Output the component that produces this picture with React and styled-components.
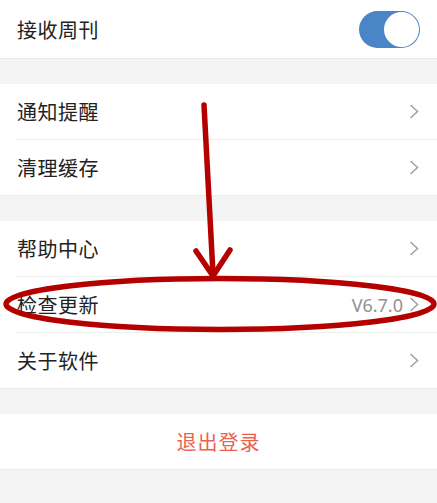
import React from 'react';
import styled, { createGlobalStyle } from 'styled-components';

const GlobalStyle = createGlobalStyle`
  html, body {
    margin: 0;
    padding: 0;
    background: #f4f4f4;
  }
  body {
    font-family: "Noto Sans CJK SC", "Noto Sans", sans-serif;
  }
`;

function Chevron() {
  return (
    <svg width="10" height="15" viewBox="0 0 10 15">
      <polyline points="1.5,1 8.5,7.5 1.5,14" fill="none" stroke="#a3a3a3" strokeWidth="1.6" />
    </svg>
  );
}

function Annotation() {
  return (
    <Overlay viewBox="0 0 437 503" width="437" height="503">
      <g fill="none" stroke="#b50000" strokeWidth="5.5" strokeLinecap="round" strokeLinejoin="round">
        <line x1="204" y1="105" x2="213" y2="274" />
        <polyline points="196,251 213,276 230,250" />
        <ellipse cx="220" cy="304" rx="214" ry="25.5" />
      </g>
    </Overlay>
  );
}

function App() {
  return (
    <Page>
      <GlobalStyle />
      <Group $first>
        <Row $tall>
          <Label>接收周刊</Label>
          <Toggle>
            <Knob />
          </Toggle>
        </Row>
      </Group>

      <Group>
        <Row>
          <Label>通知提醒</Label>
          <Chevron />
        </Row>
        <Row $divider>
          <Label>清理缓存</Label>
          <Chevron />
        </Row>
      </Group>

      <Group>
        <Row>
          <Label>帮助中心</Label>
          <Chevron />
        </Row>
        <Row $divider>
          <Label>检查更新</Label>
          <Trail>
            <Version>V6.7.0</Version>
            <Chevron />
          </Trail>
        </Row>
        <Row $divider>
          <Label>关于软件</Label>
          <Chevron />
        </Row>
      </Group>

      <Group>
        <Logout>退出登录</Logout>
      </Group>

      <Annotation />
    </Page>
  );
}

const Page = styled.div`
  position: relative;
  width: 437px;
  height: 503px;
  overflow: hidden;
  background: #f4f4f4;
`;

const Overlay = styled.svg`
  position: absolute;
  left: 0;
  top: 0;
  pointer-events: none;
`;

const Group = styled.div`
  background: #ffffff;
  margin-top: ${(p) => (p.$first ? '0' : '25px')};
  border-bottom: 1px solid #ebebeb;
`;

const Row = styled.div`
  display: flex;
  align-items: center;
  justify-content: space-between;
  height: ${(p) => (p.$tall ? '58px' : '55px')};
  margin-left: 17px;
  padding-right: 18px;
  border-top: ${(p) => (p.$divider ? '1px solid #efefef' : 'none')};
`;

const Label = styled.span`
  font-size: 20px;
  color: #222222;
  letter-spacing: 0.5px;
`;

const Trail = styled.div`
  display: flex;
  align-items: center;
  gap: 6px;
`;

const Version = styled.span`
  font-family: "Noto Sans", "Open Sans", sans-serif;
  font-size: 18px;
  color: #929292;
`;

const Toggle = styled.div`
  display: flex;
  justify-content: flex-end;
  align-items: center;
  width: 61px;
  height: 37px;
  margin-right: -1px;
  border-radius: 19px;
  background: #4a85c8;
  padding: 1px;
  box-sizing: border-box;
`;

const Knob = styled.div`
  width: 35px;
  height: 35px;
  border-radius: 50%;
  background: #ffffff;
`;

const Logout = styled.div`
  height: 55px;
  display: flex;
  align-items: center;
  justify-content: center;
  font-size: 20px;
  color: #ee5f4f;
  letter-spacing: 1px;
`;

export default App;
